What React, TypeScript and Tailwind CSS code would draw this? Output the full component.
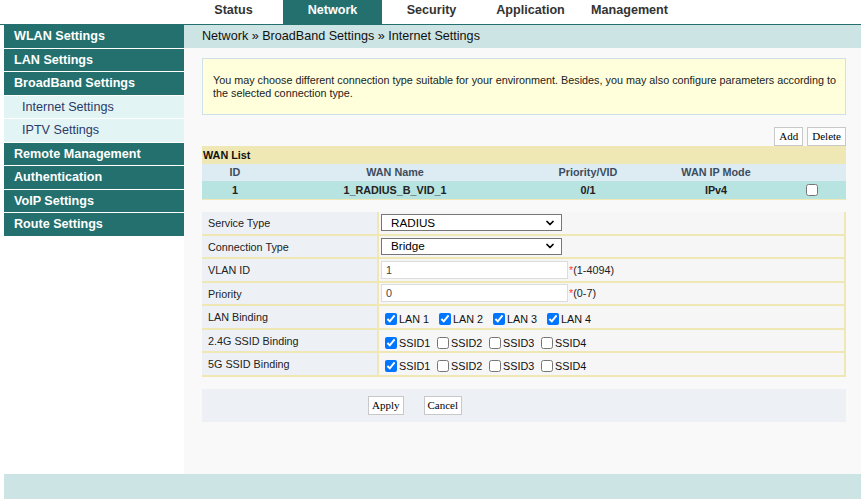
import { ChevronDown } from "lucide-react";

const TABS = ["Status", "Network", "Security", "Application", "Management"];

const MENU: { label: string; sub?: boolean; active?: boolean }[] = [
  { label: "WLAN Settings" },
  { label: "LAN Settings" },
  { label: "BroadBand Settings" },
  { label: "Internet Settings", sub: true, active: true },
  { label: "IPTV Settings", sub: true },
  { label: "Remote Management" },
  { label: "Authentication" },
  { label: "VoIP Settings" },
  { label: "Route Settings" },
];

const COLS = [
  { name: "ID", w: "w-[66px]" },
  { name: "WAN Name", w: "w-[254px]" },
  { name: "Priority/VID", w: "w-[132px]" },
  { name: "WAN IP Mode", w: "w-[124px]" },
];

function Select({ value }: { value: string }) {
  return (
    <div className="flex h-[17px] w-[181px] items-center justify-between border border-[#767676] bg-white pl-[9px] pr-[5px] text-[11.7px] leading-none text-black">
      <span>{value}</span>
      <ChevronDown size={12} strokeWidth={3.5} />
    </div>
  );
}

function TextInput({ value, hint }: { value: string; hint: string }) {
  return (
    <div className="flex items-center text-[10.8px]">
      <div className="flex h-[18px] w-[187px] items-center border border-[#dcdcdc] bg-white pl-[4px] text-[#444]">{value}</div>
      <span className="ml-[1px] text-[#ff3b3b]">*</span>
      <span className="text-[#222]">{hint}</span>
    </div>
  );
}

function Checks({ items, checked, w }: { items: string[]; checked: number; w: string }) {
  return (
    <div className="flex items-center pt-[5px] text-[10.8px] text-[#111]">
      {items.map((it, i) => (
        <label key={it} className={`${w} flex items-center`}>
          <input type="checkbox" defaultChecked={i < checked} className="mr-[2px] ml-[4px] h-[12px] w-[12px] accent-[#0075ff]" />
          <span>{it}</span>
        </label>
      ))}
    </div>
  );
}

export default function App() {
  const rows: { label: string; field: React.ReactNode }[] = [
    { label: "Service Type", field: <Select value="RADIUS" /> },
    { label: "Connection Type", field: <Select value="Bridge" /> },
    { label: "VLAN ID", field: <TextInput value="1" hint="(1-4094)" /> },
    { label: "Priority", field: <TextInput value="0" hint="(0-7)" /> },
    { label: "LAN Binding", field: <Checks items={["LAN 1", "LAN 2", "LAN 3", "LAN 4"]} checked={4} w="w-[54px]" /> },
    { label: "2.4G SSID Binding", field: <Checks items={["SSID1", "SSID2", "SSID3", "SSID4"]} checked={1} w="w-[52px]" /> },
    { label: "5G SSID Binding", field: <Checks items={["SSID1", "SSID2", "SSID3", "SSID4"]} checked={1} w="w-[52px]" /> },
  ];

  return (
    <div className="h-[499px] w-[861px] overflow-hidden bg-white font-['Liberation_Sans',Arial,sans-serif]">
      {/* top tabs */}
      <div className="flex h-[25px] border-b border-[#23706e] pl-[184px]">
        {TABS.map((t) => (
          <div
            key={t}
            className={`w-[99px] text-center text-[12.6px] font-bold leading-[20px] ${
              t === "Network" ? "bg-[#23706e] text-white" : "text-[#333]"
            }`}
          >
            {t}
          </div>
        ))}
      </div>

      <div className="flex h-[449px] pl-[4px]">
        {/* sidebar */}
        <div className="flex w-[180px] flex-col gap-[1px]">
          {MENU.map((m) =>
            m.sub ? (
              <div key={m.label} className="h-[22.5px] bg-[#e3f4f4] pl-[18px] text-[12.6px] leading-[22px] text-[#2a3a6a]">
                {m.label}
              </div>
            ) : (
              <div key={m.label} className="h-[22.5px] bg-[#23706e] pl-[10px] text-[12.6px] font-bold leading-[22px] text-white">
                {m.label}
              </div>
            )
          )}
        </div>

        {/* main */}
        <div className="flex-1 bg-[#f9f9f9]">
          <div className="h-[23px] bg-[#cde4e4] pl-[18px] text-[12.6px] leading-[22px] text-[#111]">
            Network » BroadBand Settings » Internet Settings
          </div>

          <div className="pl-[18px] pr-[15px] pt-[10px]">
            <div className="h-[57px] border border-[#cfe1e8] bg-[#ffffdc] pl-[10px] pr-[4px] pt-[15px] text-[10.8px] leading-[13px] text-[#222]">
              You may choose different connection type suitable for your environment. Besides, you may also configure parameters according to the selected connection type.
            </div>

            <div className="mt-[12px] flex justify-end gap-[4px] font-['Liberation_Serif','Times_New_Roman',serif] text-[11px]">
              <button className="h-[19px] border border-[#c8c8c8] bg-white px-[4px] leading-none text-black">Add</button>
              <button className="h-[19px] border border-[#c8c8c8] bg-white px-[4px] leading-none text-black">Delete</button>
            </div>

            {/* WAN list */}
            <div className="text-[10.8px]">
              <div className="h-[18px] bg-[#f0e8b4] pl-[1px] font-bold leading-[18px] text-[#111]">WAN List</div>
              <div className="flex h-[17px] items-center bg-[#dcecf2] font-bold text-[#3d4c5e]">
                {COLS.map((c) => (
                  <div key={c.name} className={`${c.w} text-center`}>{c.name}</div>
                ))}
              </div>
              <div className="flex h-[19px] items-center border-b border-[#f0e8b4] bg-[#b7e3e1] font-bold text-[#222]">
                <div className="w-[66px] text-center">1</div>
                <div className="w-[254px] text-center">1_RADIUS_B_VID_1</div>
                <div className="w-[132px] text-center">0/1</div>
                <div className="w-[124px] text-center">IPv4</div>
                <div className="flex w-[68px] justify-center">
                  <input type="checkbox" className="h-[12px] w-[12px]" />
                </div>
              </div>
            </div>

            {/* form */}
            <div className="mt-[12px] border-r-2 border-[#f0e8b4]">
              {rows.map((r) => (
                <div key={r.label} className="flex h-[23.5px] border-b-2 border-[#f0e8b4]">
                  <div className="w-[177px] border-r-2 border-[#f0e8b4] bg-[#edf1f6] pl-[6px] pt-[3px] text-[10.8px] text-[#222]">
                    {r.label}
                  </div>
                  <div className="flex flex-1 items-center bg-[#f6f6f6] pl-[2px]">{r.field}</div>
                </div>
              ))}
            </div>

            <div className="mt-[12px] flex h-[33px] items-center gap-[20px] bg-[#edf1f6] pl-[166px] font-['Liberation_Serif','Times_New_Roman',serif] text-[11px]">
              <button className="h-[19px] border border-[#c8c8c8] bg-white px-[3px] leading-none text-black">Apply</button>
              <button className="h-[19px] border border-[#c8c8c8] bg-white px-[3px] leading-none text-black">Cancel</button>
            </div>
          </div>
        </div>
      </div>

      <div className="ml-[4px] h-[25px] bg-[#cde4e4]" />
    </div>
  );
}
